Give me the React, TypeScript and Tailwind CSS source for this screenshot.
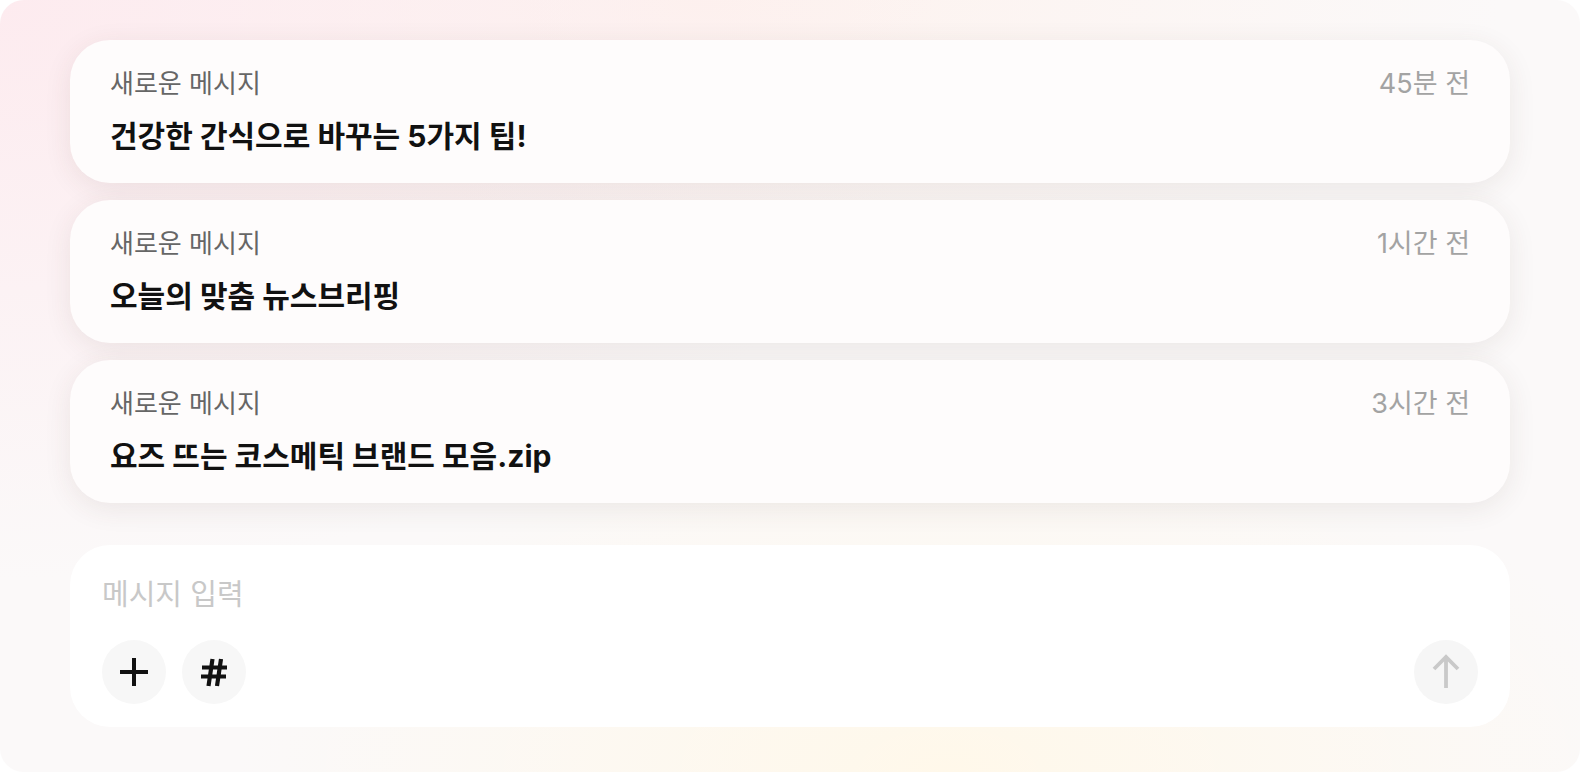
import React from "react";

const messages = [
  { label: "새로운 메시지", time: "45분 전", title: "건강한 간식으로 바꾸는 5가지 팁!" },
  { label: "새로운 메시지", time: "1시간 전", title: "오늘의 맞춤 뉴스브리핑" },
  { label: "새로운 메시지", time: "3시간 전", title: "요즈 뜨는 코스메틱 브랜드 모음.zip" },
];

function PlusIcon() {
  return (
    <svg width="30" height="30" viewBox="0 0 30 30" fill="none">
      <path d="M1 15h28M15 1v28" stroke="#111" strokeWidth="4" />
    </svg>
  );
}

function HashIcon() {
  return (
    <svg width="30" height="30" viewBox="0 0 30 30" fill="none">
      <path d="M3 10.5h25M2 19.5h25M13.5 2 9.5 29M22 2 18 29" stroke="#111" strokeWidth="4.2" />
    </svg>
  );
}

function ArrowUpIcon() {
  return (
    <svg width="28" height="36" viewBox="0 0 28 36" fill="none">
      <path d="M14 34V4M2 15 14 3l12 12" stroke="#c9c9c9" strokeWidth="3.8" />
    </svg>
  );
}

function MessageCard({ label, time, title }: { label: string; time: string; title: string }) {
  return (
    <div className="rounded-[40px] bg-[#fefcfc] px-10 pt-7 pb-[29px] shadow-[0_6px_28px_rgba(80,50,40,0.09)]">
      <div className="flex items-center justify-between text-[26px] leading-8">
        <span className="text-[#666666]">{label}</span>
        <span className="text-[27px] text-[#a3a3a3]">{time}</span>
      </div>
      <div className="mt-[18px] text-[30px] leading-9 font-bold text-[#111111]">{title}</div>
    </div>
  );
}

export default function App() {
  return (
    <div
      className="h-[772px] w-[1580px] bg-white"
      style={{ fontFamily: 'Inter, "Noto Sans CJK KR", sans-serif' }}
    >
      <div className="h-full w-full overflow-hidden rounded-[24px] bg-[#fbf9f9] bg-[radial-gradient(ellipse_60%_75%_at_0%_0%,#fdebef_0%,rgba(253,235,239,0)_100%),radial-gradient(ellipse_45%_45%_at_60%_100%,#fff8ea_0%,rgba(255,248,234,0)_100%),radial-gradient(ellipse_50%_40%_at_45%_0%,#fdf2ee_0%,rgba(253,242,238,0)_100%)] px-[70px] pt-10">
        <div className="flex flex-col gap-[17px]">
          {messages.map((m) => (
            <MessageCard key={m.time} {...m} />
          ))}
        </div>

        {/* 입력창 */}
        <div className="mt-[42px] rounded-[40px] bg-white pl-8 pr-8 pt-8 pb-[23px]">
          <div className="text-[29px] leading-9 text-[#c8c8c8]">메시지 입력</div>
          <div className="mt-[27px] flex items-center justify-between">
            <div className="flex gap-4">
              <button className="flex h-16 w-16 items-center justify-center rounded-full bg-[#f7f7f7]">
                <PlusIcon />
              </button>
              <button className="flex h-16 w-16 items-center justify-center rounded-full bg-[#f7f7f7]">
                <HashIcon />
              </button>
            </div>
            <button className="flex h-16 w-16 items-center justify-center rounded-full bg-[#f6f6f6]">
              <ArrowUpIcon />
            </button>
          </div>
        </div>
      </div>
    </div>
  );
}
